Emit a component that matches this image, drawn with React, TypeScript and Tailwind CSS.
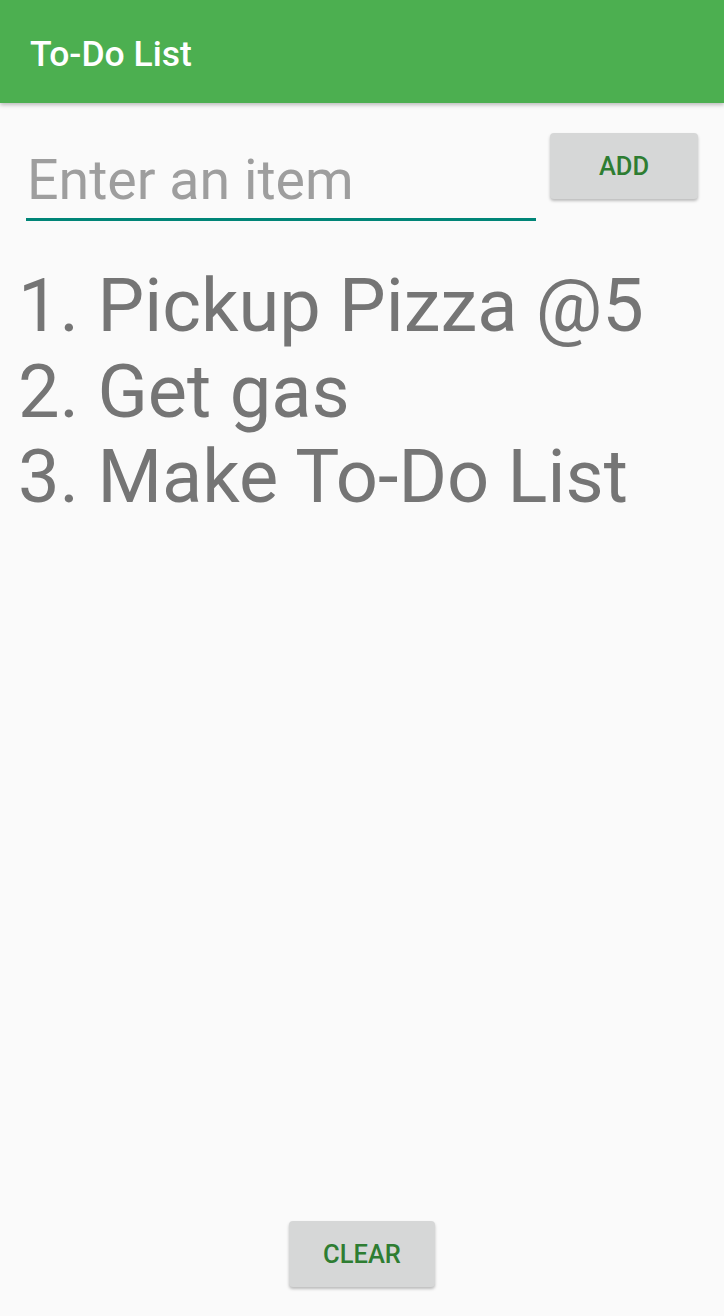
import React, { useState } from "react";

const font = { fontFamily: "Roboto, 'Noto Sans', sans-serif" };

const App: React.FC = () => {
  const [text, setText] = useState("");
  const [items, setItems] = useState<string[]>([
    "Pickup Pizza @5",
    "Get gas",
    "Make To-Do List",
  ]);

  const addItem = () => {
    if (!text.trim()) return;
    setItems([...items, text.trim()]);
    setText("");
  };

  return (
    <div
      className="flex h-[1316px] w-[724px] flex-col bg-[#fafafa]"
      style={font}
    >
      <header className="relative z-10 flex h-[103px] shrink-0 items-center bg-[#4caf50] pl-[30px] pt-[6px] shadow-[0_2px_4px_rgba(0,0,0,0.25)]">
        <h1 className="text-[35.5px] font-medium leading-none text-white">
          To-Do List
        </h1>
      </header>

      <div className="flex items-start pl-[26px] pr-[26px] pt-[30px]">
        <input
          type="text"
          value={text}
          onChange={(e) => setText(e.target.value)}
          placeholder="Enter an item"
          className="h-[88px] w-[510px] border-b-[3px] border-[#008577] bg-transparent pb-[5px] pl-[1px] pt-[14px] text-[55.5px] leading-[66px] text-[#757575] outline-none placeholder:text-[#9e9e9e]"
        />
        <button
          onClick={addItem}
          className="ml-auto h-[66px] w-[148px] rounded-[4px] bg-[#d6d7d7] text-[25.5px] font-medium text-[#2e7d32] shadow-[0_2px_3px_rgba(0,0,0,0.25)]"
        >
          ADD
        </button>
      </div>

      <ol className="mt-[42px] pl-[18px] text-[74px] leading-[85.5px] text-[#757575]">
        {items.map((item, i) => (
          <li key={i}>
            {i + 1}. {item}
          </li>
        ))}
      </ol>

      <div className="mt-auto flex justify-center pb-[29px]">
        <button
          onClick={() => setItems([])}
          className="h-[66px] w-[146px] rounded-[4px] bg-[#d6d7d7] text-[25.5px] font-medium text-[#2e7d32] shadow-[0_2px_3px_rgba(0,0,0,0.25)]"
        >
          CLEAR
        </button>
      </div>
    </div>
  );
};

export default App;
